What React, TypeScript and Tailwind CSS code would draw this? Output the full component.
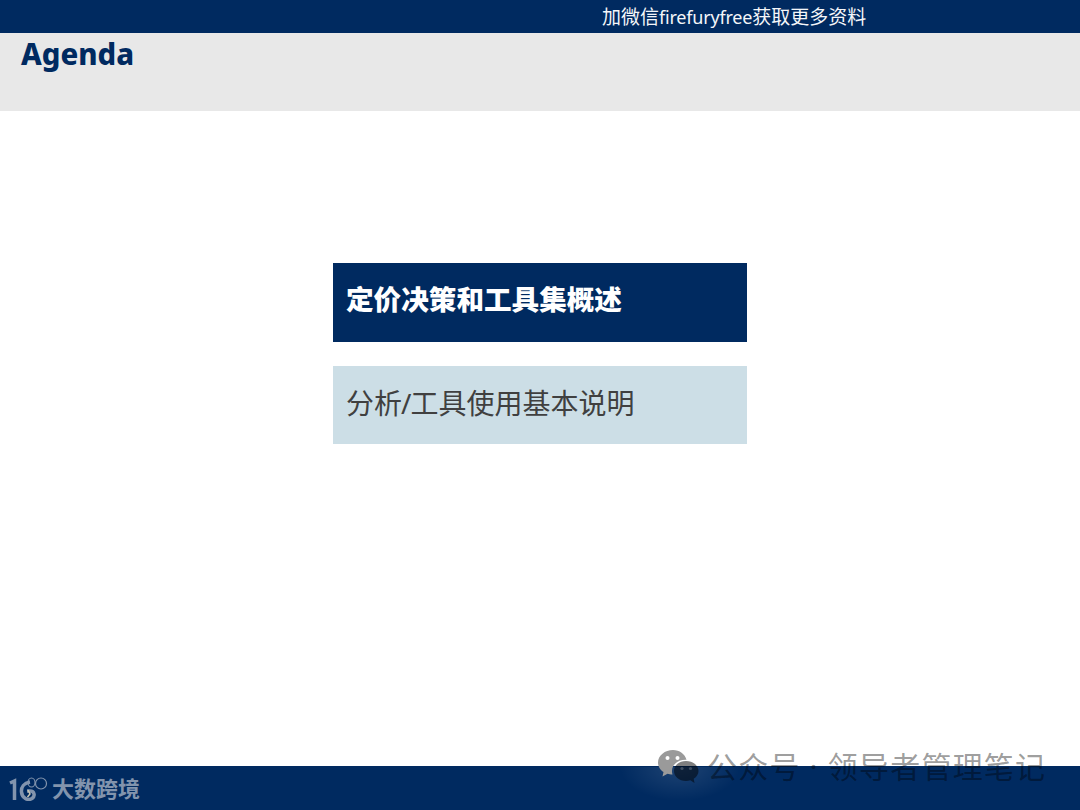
export default function App() {
  return (
    <div className="relative flex h-[810px] w-[1080px] flex-col overflow-hidden bg-white font-['Noto_Sans','Noto_Sans_CJK_SC',sans-serif]">
      {/* top bar */}
      <div className="flex h-[33px] shrink-0 items-center bg-[#002a60] pt-[1px] pl-[602px]">
        <span className="text-[19px] leading-none text-[#f4f6f9]">
          加微信<span className="text-[18px] tracking-[-0.2px]">firefuryfree</span>获取更多资料
        </span>
      </div>

      {/* title band */}
      <div className="h-[78px] shrink-0 bg-[#e8e8e8] pt-[1px] pl-[21px]">
        <h1 className="text-[29.3px] leading-[40px] font-extrabold text-[#002a60]">Agenda</h1>
      </div>

      {/* agenda items */}
      <main className="flex flex-1 flex-col items-center gap-6 pt-[152px]">
        <div className="flex h-[79px] w-[414px] items-center bg-[#002a60] pb-[6px] pl-[13px]">
          <span className="text-[27.6px] leading-none font-black text-white">定价决策和工具集概述</span>
        </div>
        <div className="flex h-[78px] w-[414px] items-center bg-[#ccdee6] pb-[5px] pl-[13px]">
          <span className="text-[28px] leading-none text-[#404040]">
            分析<span className="mx-[-1px]">/</span>工具使用基本说明
          </span>
        </div>
      </main>

      {/* footer */}
      <footer className="flex h-[44px] shrink-0 items-center gap-[4px] bg-[#002a60] pl-[9px]">
        <svg width="39" height="28" viewBox="0 0 39 28" fill="none" className="mb-[2px]">
          <path d="M1 10 L5.500 8 V27" stroke="#8294ad" strokeWidth="3.500" />
          <path d="M21 9 C15 10 12 14 12.500 19 C13 25 19 28 23 25.500 C26.500 23 25.500 18 21 18 L18 18" stroke="#8294ad" strokeWidth="3.500" />
          <path d="M19 17 L21 21 L18.500 24" stroke="#c9c6b4" strokeWidth="1.500" />
          <ellipse cx="22.500" cy="9.500" rx="3.500" ry="4.500" stroke="#8294ad" strokeWidth="1.100" />
          <circle cx="32" cy="10.500" r="5.500" stroke="#8294ad" strokeWidth="1.200" />
        </svg>
        <span className="text-[22px] leading-none font-bold text-[#8294ad]">大数跨境</span>
      </footer>

      {/* soft glow the watermark leaves on the footer */}
      <div className="absolute top-[767px] left-[620px] h-[43px] w-[120px] bg-[radial-gradient(ellipse_60px_34px_at_50%_0%,rgba(255,255,255,0.12),rgba(255,255,255,0))]" />

      {/* watermark over footer edge */}
      <div className="absolute top-[749px] left-[658px] flex items-center gap-[8px]">
        <svg width="41" height="36" viewBox="0 0 41 36">
          <path
            d="M15 1 C7 1 0 6.500 0 13.500 C0 17.500 2.300 21 5.500 23 L4.500 27.500 L9.500 24.800 C11 25.200 12.500 25.500 14.500 25.500 C14.100 24.200 14 23 14 22 C14 15 20.500 10.500 28.500 10.800 C27 5 21.500 1 15 1 Z"
            fill="#9a9a9a"
          />
          <path
            d="M28 12 C21 12 16 16.500 16 22 C16 27.500 21 32 28 32 C29.500 32 31 31.800 32.300 31.300 L36.500 34 L35.700 29.800 C38.800 27.800 40.500 25 40.500 22 C40.500 16.500 35 12 28 12 Z"
            fill="#000000"
            fillOpacity="0.5"
          />
          <circle cx="9.500" cy="9" r="2" fill="#ffffff" />
          <circle cx="19.500" cy="9" r="2" fill="#ffffff" />
          <circle cx="24" cy="19.500" r="1.600" fill="#ffffff" fillOpacity="0.2" />
          <circle cx="32.500" cy="19.500" r="1.600" fill="#ffffff" fillOpacity="0.2" />
        </svg>
        <span className="text-[30px] leading-none tracking-[1.200px] whitespace-nowrap text-black/40">公众号 · 领导者管理笔记</span>
      </div>
    </div>
  );
}
